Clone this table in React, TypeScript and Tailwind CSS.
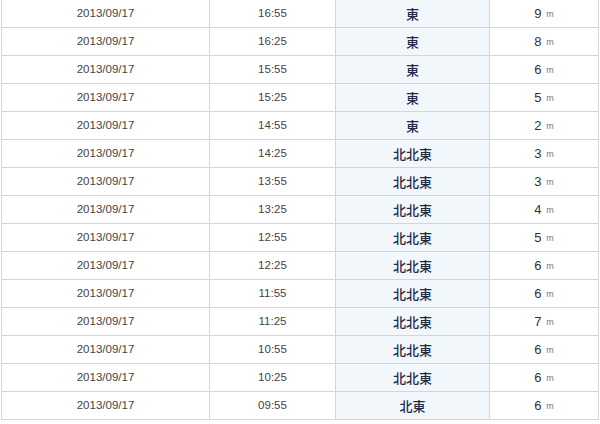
import React from "react";

const rows: [string, string, string, string][] = [
  ["2013/09/17", "16:55", "東", "9"],
  ["2013/09/17", "16:25", "東", "8"],
  ["2013/09/17", "15:55", "東", "6"],
  ["2013/09/17", "15:25", "東", "5"],
  ["2013/09/17", "14:55", "東", "2"],
  ["2013/09/17", "14:25", "北北東", "3"],
  ["2013/09/17", "13:55", "北北東", "3"],
  ["2013/09/17", "13:25", "北北東", "4"],
  ["2013/09/17", "12:55", "北北東", "5"],
  ["2013/09/17", "12:25", "北北東", "6"],
  ["2013/09/17", "11:55", "北北東", "6"],
  ["2013/09/17", "11:25", "北北東", "7"],
  ["2013/09/17", "10:55", "北北東", "6"],
  ["2013/09/17", "10:25", "北北東", "6"],
  ["2013/09/17", "09:55", "北東", "6"],
];

export default function App() {
  return (
    <div className="w-[600px] h-[424px] overflow-hidden bg-white">
      <div
        className="ml-px -mt-px w-[598px] border-t border-l border-[#d6d6d6]"
        style={{ fontFamily: '"Liberation Sans", Arial, "Noto Sans CJK JP", sans-serif' }}
      >
        {rows.map((r, i) => (
          <div key={i} className="flex h-[28px] border-b border-[#d6d6d6]">
            <div className="w-[208px] border-r border-[#d6d6d6] flex items-center justify-center text-[11.5px] text-[#444]">
              {r[0]}
            </div>
            <div className="w-[126px] border-r border-[#d6d6d6] flex items-center justify-center text-[11.5px] text-[#444]">
              {r[1]}
            </div>
            <div
              className="w-[154px] border-r border-[#d6d6d6] bg-[#f2f7fc] flex items-center justify-center text-[13px] font-medium text-[#1e2b48]"
              style={{ fontFamily: '"Noto Sans CJK JP", sans-serif' }}
            >
              {r[2]}
            </div>
            <div className="flex-1 border-r border-[#d6d6d6] flex items-center justify-center gap-[5px] text-[#333]">
              <span className="text-[13px]">{r[3]}</span>
              <span className="text-[9px] text-[#777] mt-[2px]">m</span>
            </div>
          </div>
        ))}
      </div>
    </div>
  );
}
